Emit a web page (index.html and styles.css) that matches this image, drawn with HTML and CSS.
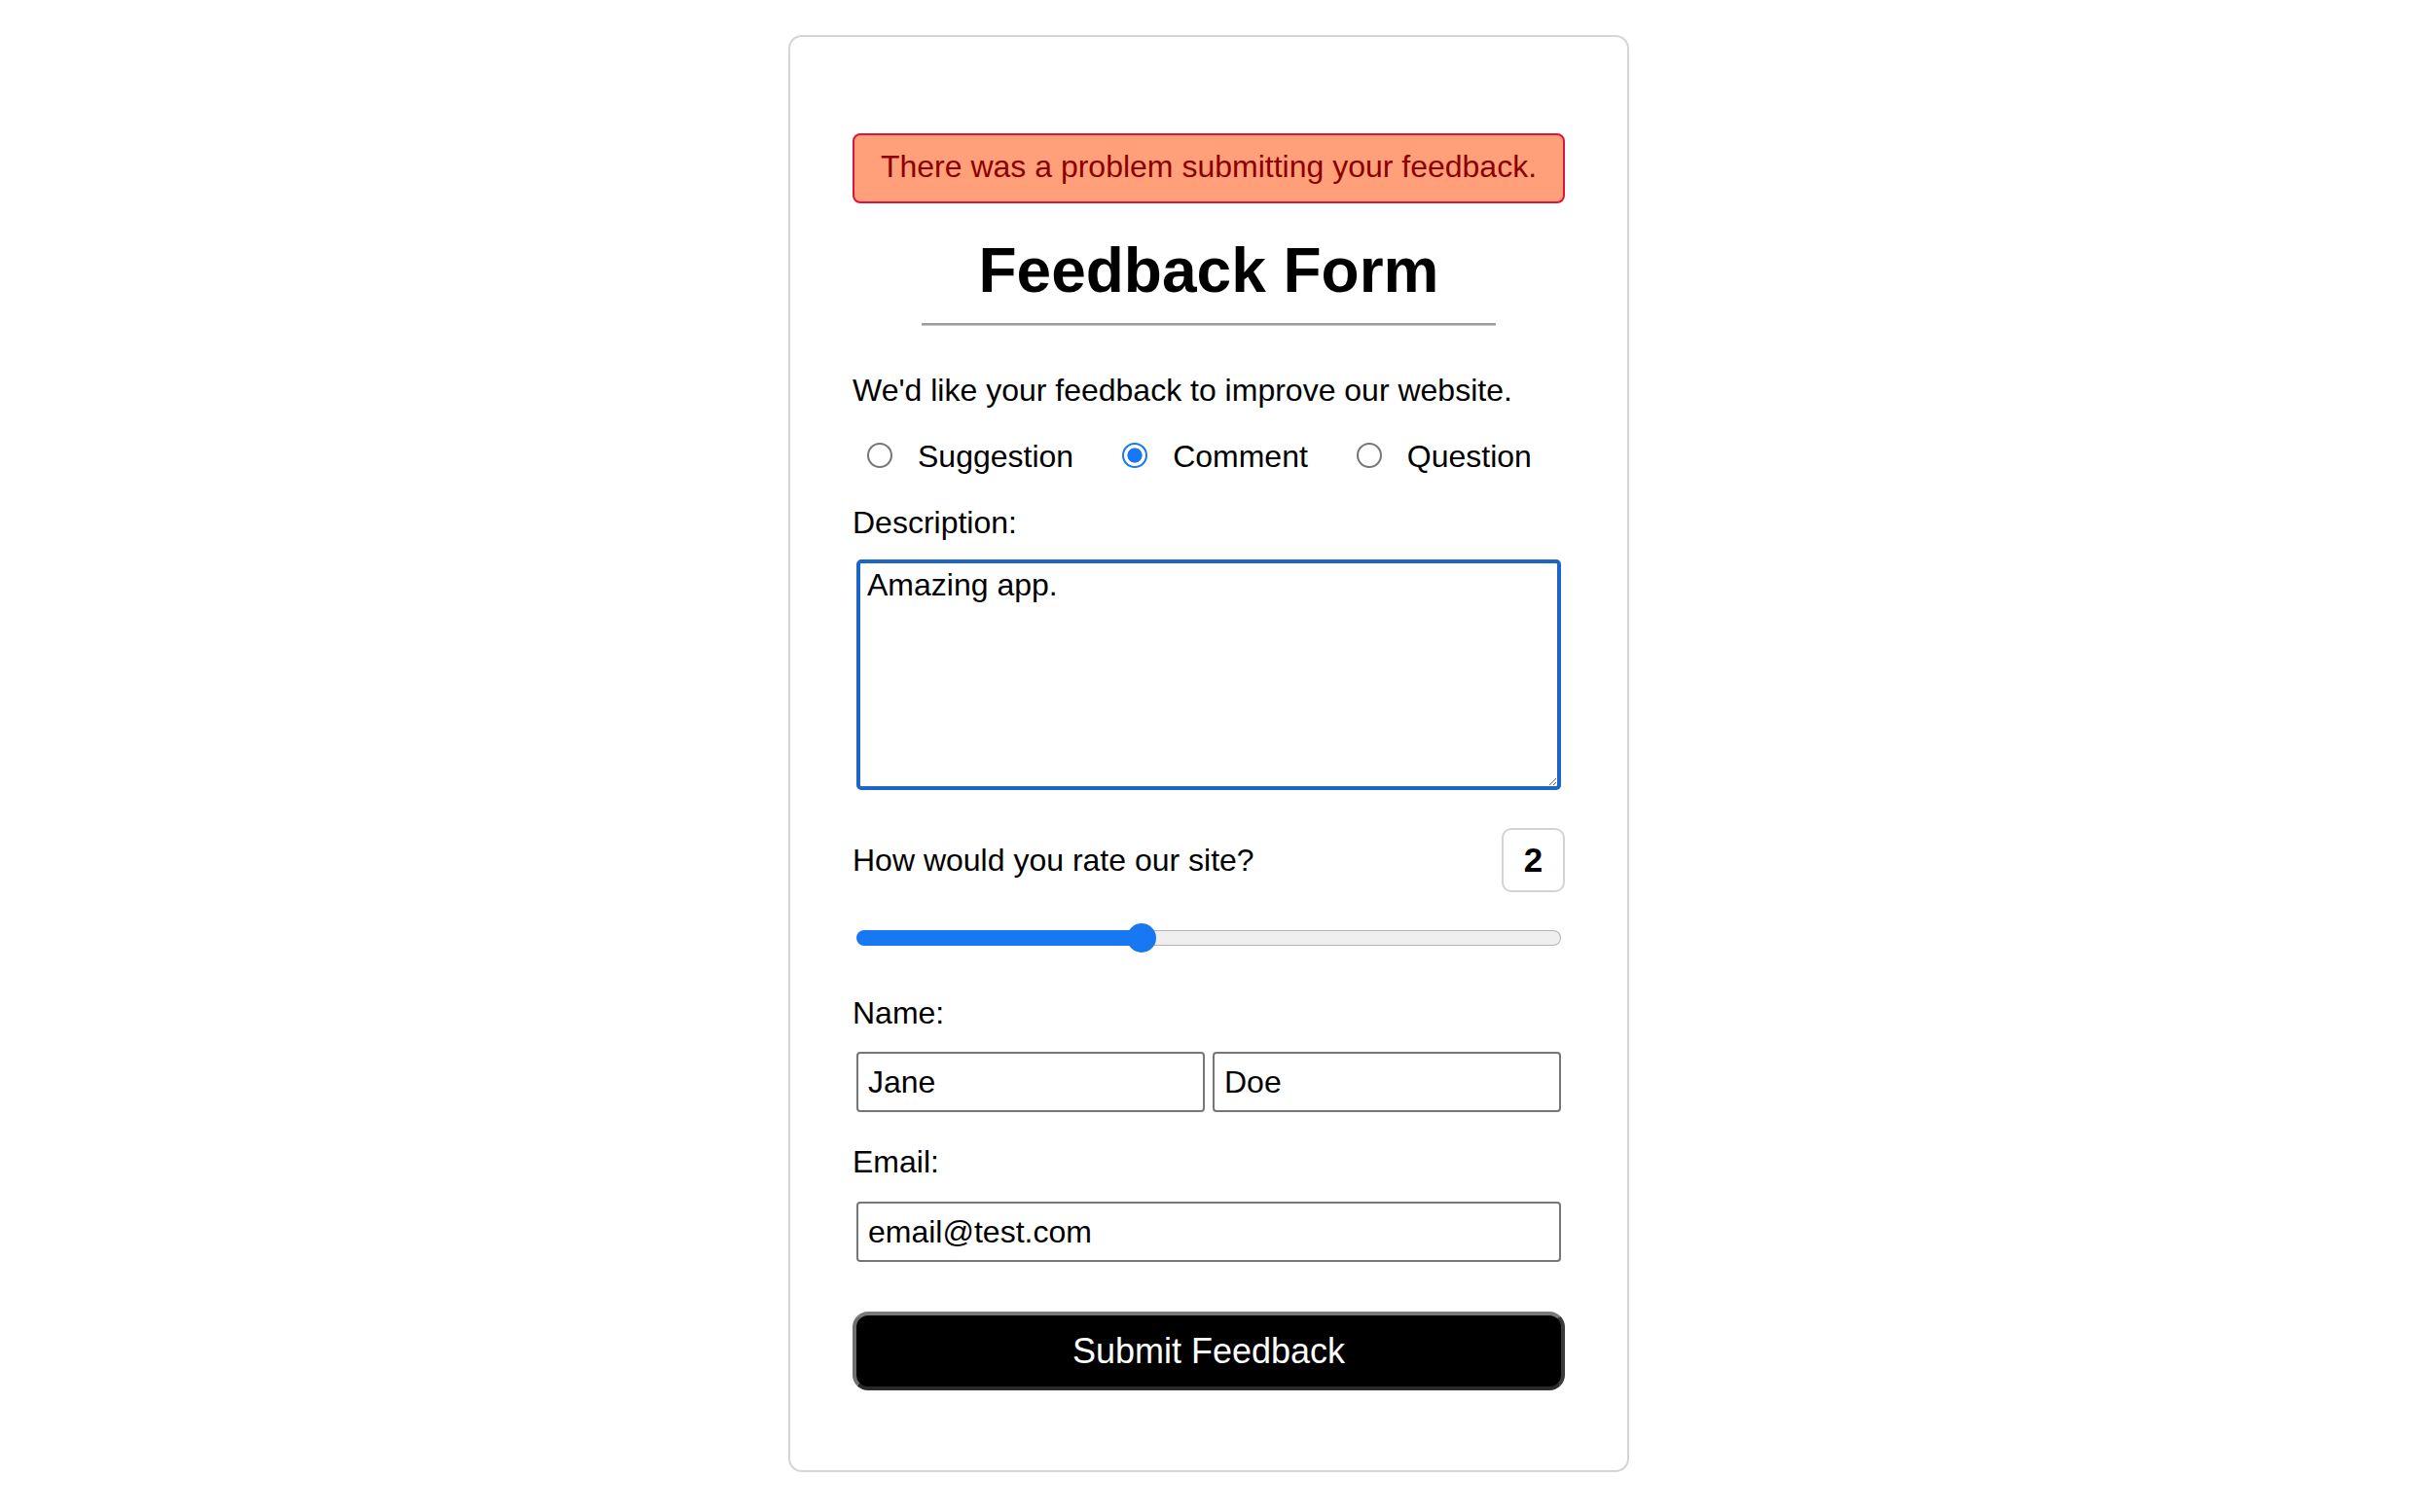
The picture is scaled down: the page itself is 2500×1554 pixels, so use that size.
FILE: index.html
```html
<!DOCTYPE html>
<html lang="en">
<head>
<meta charset="utf-8">
<title>Feedback Form</title>
<link rel="stylesheet" href="styles.css">
</head>
<body>
<div class="page">
  <form class="card">
    <div class="alert">There was a problem submitting your feedback.</div>
    <h1 class="title">Feedback Form</h1>
    <hr class="rule">
    <p class="intro">We'd like your feedback to improve our website.</p>
    <div class="choices">
      <label class="choice"><input type="radio" name="kind" class="radio"><span>Suggestion</span></label>
      <label class="choice"><input type="radio" name="kind" class="radio" checked><span>Comment</span></label>
      <label class="choice"><input type="radio" name="kind" class="radio"><span>Question</span></label>
    </div>
    <label class="field-label desc-label" for="desc">Description:</label>
    <textarea id="desc" class="desc">Amazing app.</textarea>
    <div class="rating-row">
      <span class="rating-label">How would you rate our site?</span>
      <output class="rating-value">2</output>
    </div>
    <input type="range" class="slider" min="0" max="5" value="2" style="--v: 0.4">
    <label class="field-label name-label">Name:</label>
    <div class="name-row">
      <input type="text" class="text-input" value="Jane">
      <input type="text" class="text-input" value="Doe">
    </div>
    <label class="field-label email-label" for="email">Email:</label>
    <input type="email" id="email" class="text-input email" value="email@test.com">
    <button type="button" class="submit">Submit Feedback</button>
  </form>
</div>
</body>
</html>
```
FILE: styles.css
```css
html, body {
  margin: 0;
  padding: 0;
  background: #ffffff;
}

body {
  font-family: "Liberation Sans", Arial, Helvetica, sans-serif;
  color: #000;
}

.page {
  display: flex;
  justify-content: center;
  padding: 36px 16px 0 0;
}

.card {
  width: 864px;
  box-sizing: border-box;
  border: 2px solid #d5d5d5;
  border-radius: 14px;
  padding: 64px 64px 82px;
  display: flex;
  flex-direction: column;
  font-size: 32px;
  line-height: 36px;
}

.alert {
  margin-top: 35px;
  height: 72px;
  box-sizing: border-box;
  padding: 14px 20px 0;
  background: #ffa07a;
  border: 2px solid #dc143c;
  border-radius: 8px;
  color: #8b0000;
  text-align: center;
  font-size: 32px;
  line-height: 36px;
}

.title {
  margin: 32px 0 0;
  font-size: 64px;
  line-height: 74px;
  font-weight: bold;
  text-align: center;
}

.rule {
  margin: 17px auto 0;
  width: 590px;
  height: 0;
  border: 0;
  border-top: 2px solid #9d9d9d;
  border-bottom: 1px solid #c8c8c8;
}

.intro {
  margin: 48px 0 0;
}

.choices {
  margin-top: 32px;
  display: flex;
  align-items: center;
  gap: 35px;
}

.choice {
  display: flex;
  align-items: center;
}

.radio {
  appearance: none;
  -webkit-appearance: none;
  width: 26px;
  height: 26px;
  box-sizing: border-box;
  margin: 0 26px 0 15px;
  border: 2px solid #767676;
  border-radius: 50%;
  background: #fff;
  position: relative;
  top: -1px;
}

.radio:checked {
  border: 2px solid #1877f2;
  background: radial-gradient(circle closest-side, #1877f2 0, #1877f2 66%, #ffffff 72%);
}

.field-label {
  display: block;
}

.desc-label {
  margin-top: 32px;
}

.desc {
  margin: 20px 4px 0;
  height: 237px;
  box-sizing: border-box;
  border: 4px solid #1b66c6;
  border-radius: 5px;
  padding: 4px 7px;
  font-family: "Liberation Sans", Arial, Helvetica, sans-serif;
  font-size: 32px;
  line-height: 36px;
  color: #000;
  outline: none;
  resize: vertical;
}

.rating-row {
  margin-top: 39px;
  display: flex;
  align-items: center;
  justify-content: space-between;
}

.rating-value {
  width: 65px;
  height: 66px;
  box-sizing: border-box;
  border: 2px solid #d3d3d3;
  border-radius: 10px;
  display: flex;
  align-items: center;
  justify-content: center;
  font-weight: bold;
  font-size: 35px;
}

.slider {
  -webkit-appearance: none;
  appearance: none;
  margin: 32px 4px 0;
  padding: 0;
  height: 30px;
  background: transparent;
}

.slider::-webkit-slider-runnable-track {
  height: 16px;
  box-sizing: border-box;
  border: 1.5px solid transparent;
  border-radius: 8px;
  background:
    linear-gradient(to right, #1877f2 calc(15px + (100% - 30px) * var(--v)), transparent calc(15px + (100% - 30px) * var(--v))) border-box,
    linear-gradient(#efefef, #efefef) padding-box,
    linear-gradient(#b3b3b3, #b3b3b3) border-box;
}

.slider::-webkit-slider-thumb {
  -webkit-appearance: none;
  appearance: none;
  width: 30px;
  height: 30px;
  margin-top: -8.5px;
  border: 0;
  border-radius: 50%;
  background: #1877f2;
}

.name-label {
  margin-top: 44px;
}

.name-row {
  margin-top: 22px;
  display: flex;
}

.text-input {
  flex: 1;
  min-width: 0;
  height: 62px;
  box-sizing: border-box;
  margin: 0 4px;
  padding: 0 10px;
  border: 2px solid #767676;
  border-radius: 4px;
  font-family: "Liberation Sans", Arial, Helvetica, sans-serif;
  font-size: 32px;
  color: #000;
  background: #fff;
  outline: none;
}

.email-label {
  margin-top: 33px;
}

.email {
  margin-top: 23px;
  flex: none;
}

.submit {
  margin-top: 51px;
  height: 81px;
  box-sizing: border-box;
  border: 4px solid;
  border-color: #7a7a7a #3a3a3a #2a2a2a #707070;
  border-radius: 16px;
  background: #000;
  color: #fff;
  font-family: "Liberation Sans", Arial, Helvetica, sans-serif;
  font-size: 36px;
  line-height: 36px;
  padding: 0;
}
```
